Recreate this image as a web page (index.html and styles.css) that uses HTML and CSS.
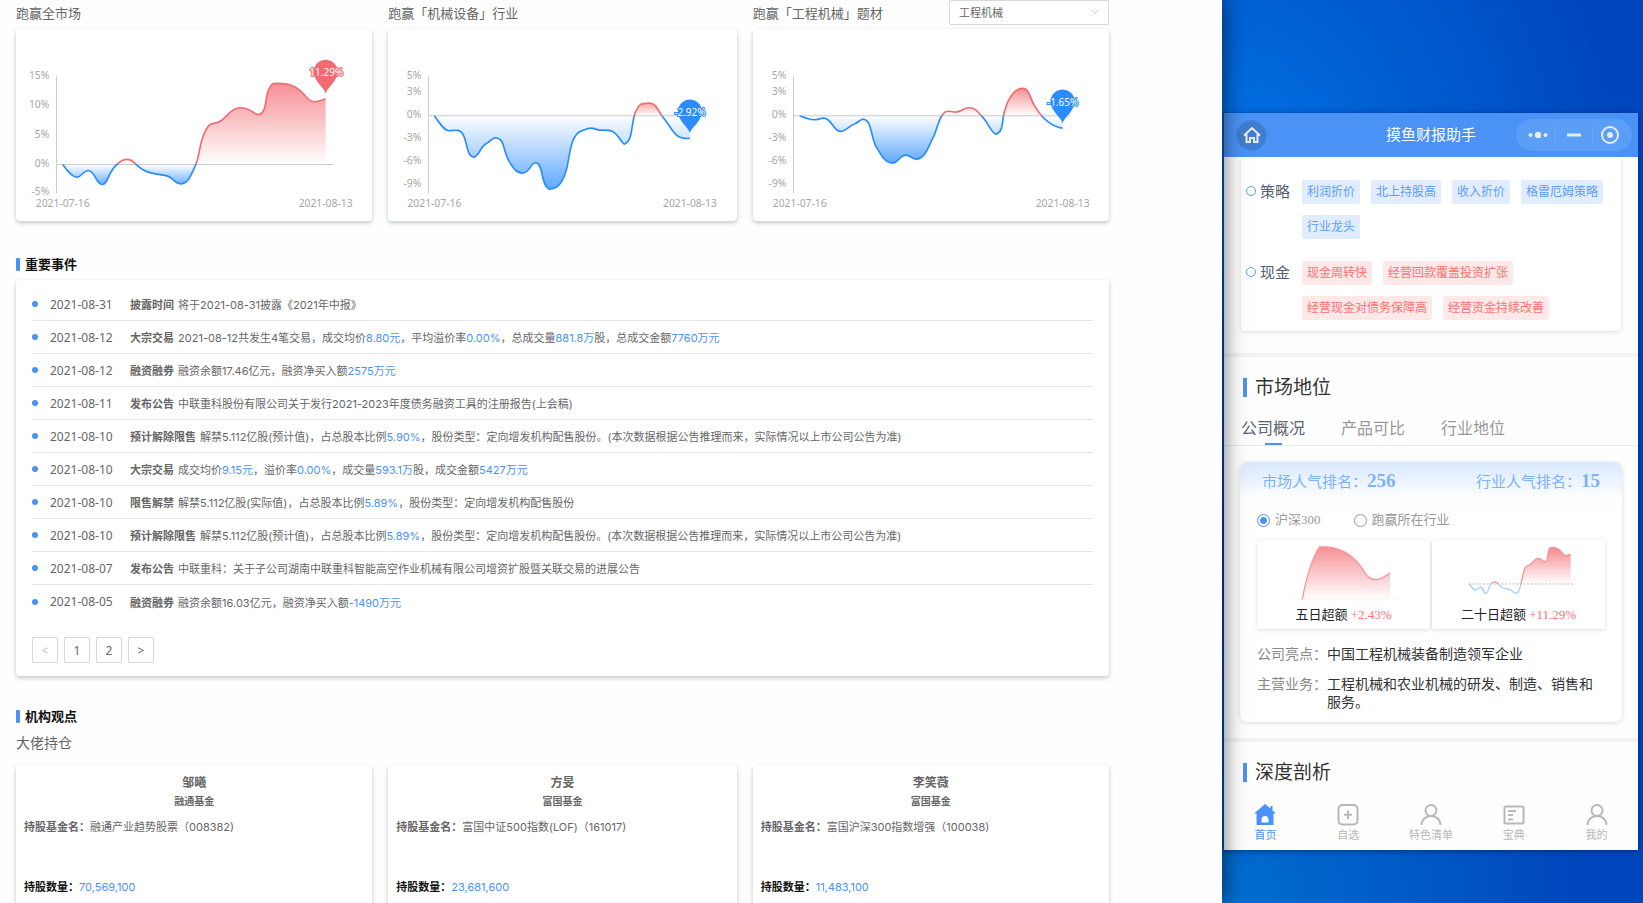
FILE: index.html
```html
<!DOCTYPE html>
<html lang="zh-CN">
<head>
<meta charset="utf-8">
<title>摸鱼财报助手</title>
<link rel="stylesheet" href="styles.css">
</head>
<body>
<svg class="defs" width="0" height="0" aria-hidden="true">
  <defs>
    <linearGradient id="line1" gradientUnits="userSpaceOnUse" x1="0" y1="0" x2="0" y2="986"><stop offset=".5" stop-color="#f26b72"/><stop offset=".5" stop-color="#2a8cff"/></linearGradient>
    <linearGradient id="line2" gradientUnits="userSpaceOnUse" x1="0" y1="0" x2="0" y2="694"><stop offset=".5" stop-color="#f26b72"/><stop offset=".5" stop-color="#2a8cff"/></linearGradient>
    <linearGradient id="area1" gradientUnits="userSpaceOnUse" x1="0" y1="250" x2="0" y2="554"><stop offset="0" stop-color="#f26b72" stop-opacity=".75"/><stop offset=".8" stop-color="#f26b72" stop-opacity="0"/><stop offset=".8" stop-color="#2a8cff" stop-opacity="0"/><stop offset="1" stop-color="#2a8cff" stop-opacity=".7"/></linearGradient>
    <linearGradient id="area2" gradientUnits="userSpaceOnUse" x1="0" y1="297" x2="0" y2="567"><stop offset="0" stop-color="#f26b72" stop-opacity=".8"/><stop offset=".185" stop-color="#f26b72" stop-opacity="0"/><stop offset=".185" stop-color="#2a8cff" stop-opacity="0"/><stop offset="1" stop-color="#2a8cff" stop-opacity=".75"/></linearGradient>
    <linearGradient id="area3" gradientUnits="userSpaceOnUse" x1="0" y1="265" x2="0" y2="489"><stop offset="0" stop-color="#f26b72" stop-opacity=".75"/><stop offset=".366" stop-color="#f26b72" stop-opacity="0"/><stop offset=".366" stop-color="#2a8cff" stop-opacity="0"/><stop offset="1" stop-color="#2a8cff" stop-opacity=".75"/></linearGradient>
    <linearGradient id="mini1" gradientUnits="userSpaceOnUse" x1="0" y1="48" x2="0" y2="207"><stop offset="0" stop-color="#f26b72" stop-opacity=".75"/><stop offset="1" stop-color="#f26b72" stop-opacity="0"/></linearGradient>
    <linearGradient id="mini2" gradientUnits="userSpaceOnUse" x1="0" y1="50" x2="0" y2="160"><stop offset="0" stop-color="#f26b72" stop-opacity=".8"/><stop offset="1" stop-color="#f26b72" stop-opacity="0"/></linearGradient>
    <linearGradient id="miniline" gradientUnits="userSpaceOnUse" x1="0" y1="0" x2="0" y2="320"><stop offset=".5" stop-color="#f4969b"/><stop offset=".5" stop-color="#a5cdff"/></linearGradient>
  </defs>
</svg>

<main class="report">
  <section class="charts">
    <article class="chart">
      <header class="chart-head"><h3>跑赢全市场</h3></header>
      <svg class="card plot" viewBox="48 87 1068 576" role="img" aria-label="跑赢全市场 11.29%">
        <path class="axis" d="M169.500 229V580M169 493H998"/>
        <g class="ticks"><text x="148" y="238">15%</text><text x="148" y="325">10%</text><text x="148" y="414">5%</text><text x="148" y="500">0%</text><text x="148" y="586">-5%</text></g>
        <g class="dates"><text x="188" y="620">2021-07-16</text><text x="976" y="620">2021-08-13</text></g>
        <path fill="url(#area1)" d="M188 493C200 510 216 531 230 531C245 531 250 511 264 511C285 511 288 553 306 553C325 553 325 510 353 491C365 480 370 478 380 478C395 478 400 485 408 493C420 505 435 515 455 519C475 524 490 523 503 528C520 535 525 551 541 551C565 551 572 525 587 493C600 460 597 430 614 396C628 366 632 373 655 366C675 360 690 323 718 323C755 323 760 344 774 344C803 338 792 290 807 265C815 248 818 250 835 250C865 250 880 256 900 272C915 283 922 305 942 305C955 305 965 300 976 296V493Z"/>
        <path class="curve" stroke="url(#line1)" d="M188 493C200 510 216 531 230 531C245 531 250 511 264 511C285 511 288 553 306 553C325 553 325 510 353 491C365 480 370 478 380 478C395 478 400 485 408 493C420 505 435 515 455 519C475 524 490 523 503 528C520 535 525 551 541 551C565 551 572 525 587 493C600 460 597 430 614 396C628 366 632 373 655 366C675 360 690 323 718 323C755 323 760 344 774 344C803 338 792 290 807 265C815 248 818 250 835 250C865 250 880 256 900 272C915 283 922 305 942 305C955 305 965 300 976 296"/>
        <g class="pin red"><path d="M976 282C976 266 940 245 940 215A36 36 0 0 1 1012 215C1012 245 976 266 976 282Z"/><text x="978" y="228">11.29%</text></g>
      </svg>
    </article>
    <article class="chart">
      <header class="chart-head"><h3>跑赢「机械设备」行业</h3></header>
      <svg class="card plot" viewBox="39 87 1044 576" role="img" aria-label="跑赢机械设备行业 -2.92%">
        <path class="axis" d="M160.500 229V580M160 347H968"/>
        <g class="ticks"><text x="139" y="238">5%</text><text x="139" y="284">3%</text><text x="139" y="354">0%</text><text x="139" y="423">-3%</text><text x="139" y="493">-6%</text><text x="139" y="562">-9%</text></g>
        <g class="dates"><text x="178" y="620">2021-07-16</text><text x="944" y="620">2021-08-13</text></g>
        <path fill="url(#area2)" d="M178 347C192 368 208 392 222 392C235 392 240 389 248 391C280 396 268 470 297 471C312 468 315 440 336 429C345 423 353 413 362 413C390 416 383 450 400 480C414 504 424 519 442 519C464 519 466 488 482 488C505 488 496 555 522 567C550 567 565 545 576 500C585 450 590 400 622 391C632 387 638 384 648 384C658 384 665 390 675 390C690 390 703 389 712 394C730 402 740 432 748 432C777 420 765 360 785 327C792 312 798 310 820 309C836 308 840 315 860 347C880 372 890 393 903 404C915 415 930 416 944 415V347Z"/>
        <path class="curve" stroke="url(#line2)" d="M178 347C192 368 208 392 222 392C235 392 240 389 248 391C280 396 268 470 297 471C312 468 315 440 336 429C345 423 353 413 362 413C390 416 383 450 400 480C414 504 424 519 442 519C464 519 466 488 482 488C505 488 496 555 522 567C550 567 565 545 576 500C585 450 590 400 622 391C632 387 638 384 648 384C658 384 665 390 675 390C690 390 703 389 712 394C730 402 740 432 748 432C777 420 765 360 785 327C792 312 798 310 820 309C836 308 840 315 860 347C880 372 890 393 903 404C915 415 930 416 944 415"/>
        <g class="pin blue"><path d="M944 401C944 385 908 364 908 334A36 36 0 0 1 980 334C980 364 944 385 944 401Z"/><text x="944" y="348">-2.92%</text></g>
      </svg>
    </article>
    <article class="chart">
      <header class="chart-head"><h3>跑赢「工程机械」题材</h3>
        <span class="picker"><select aria-label="题材"><option>工程机械</option></select><svg viewBox="0 0 10 8" aria-hidden="true"><path d="M1 1L5 6L9 1"/></svg></span>
      </header>
      <svg class="card plot" viewBox="36 87 1068 576" role="img" aria-label="跑赢工程机械题材 -1.65%">
        <path class="axis" d="M157.500 229V580M157 347H986"/>
        <g class="ticks"><text x="136" y="238">5%</text><text x="136" y="284">3%</text><text x="136" y="354">0%</text><text x="136" y="423">-3%</text><text x="136" y="493">-6%</text><text x="136" y="562">-9%</text></g>
        <g class="dates"><text x="176" y="620">2021-07-16</text><text x="964" y="620">2021-08-13</text></g>
        <path fill="url(#area3)" d="M176 347C190 353 203 359 220 359C232 359 238 353 250 354C275 358 275 394 300 394C315 392 322 378 342 371C352 366 358 357 367 357C392 362 388 405 404 438C420 465 432 489 454 489C470 489 477 465 493 465C507 465 512 477 527 477C555 472 560 440 578 408C590 380 592 355 608 339C617 328 628 336 643 336C660 336 665 323 684 323C700 323 708 332 720 347C740 365 752 402 764 402C790 395 780 355 792 327C804 285 825 265 844 265C864 265 866 295 880 318C900 350 930 380 964 384V347Z"/>
        <path class="curve" stroke="url(#line2)" d="M176 347C190 353 203 359 220 359C232 359 238 353 250 354C275 358 275 394 300 394C315 392 322 378 342 371C352 366 358 357 367 357C392 362 388 405 404 438C420 465 432 489 454 489C470 489 477 465 493 465C507 465 512 477 527 477C555 472 560 440 578 408C590 380 592 355 608 339C617 328 628 336 643 336C660 336 665 323 684 323C700 323 708 332 720 347C740 365 752 402 764 402C790 395 780 355 792 327C804 285 825 265 844 265C864 265 866 295 880 318C900 350 930 380 964 384"/>
        <g class="pin blue"><path d="M964 371C964 355 928 334 928 304A36 36 0 0 1 1000 304C1000 334 964 355 964 371Z"/><text x="964" y="317">-1.65%</text></g>
      </svg>
    </article>
  </section>

  <section class="events">
    <h2 class="title">重要事件</h2>
    <div class="card events-card">
      <ul class="event-list">
        <li><time>2021-08-31</time><p><b>披露时间</b> 将于2021-08-31披露《2021年中报》</p></li>
        <li><time>2021-08-12</time><p><b>大宗交易</b> 2021-08-12共发生4笔交易，成交均价<em>8.80元</em>，平均溢价率<em>0.00%</em>，总成交量<em>881.8万</em>股，总成交金额<em>7760万元</em></p></li>
        <li><time>2021-08-12</time><p><b>融资融券</b> 融资余额17.46亿元，融资净买入额<em>2575万元</em></p></li>
        <li><time>2021-08-11</time><p><b>发布公告</b> 中联重科股份有限公司关于发行2021-2023年度债务融资工具的注册报告(上会稿)</p></li>
        <li><time>2021-08-10</time><p><b>预计解除限售</b> 解禁5.112亿股(预计值)，占总股本比例<em>5.90%</em>，股份类型：定向增发机构配售股份。(本次数据根据公告推理而来，实际情况以上市公司公告为准)</p></li>
        <li><time>2021-08-10</time><p><b>大宗交易</b> 成交均价<em>9.15元</em>，溢价率<em>0.00%</em>，成交量<em>593.1万</em>股，成交金额<em>5427万元</em></p></li>
        <li><time>2021-08-10</time><p><b>限售解禁</b> 解禁5.112亿股(实际值)，占总股本比例<em>5.89%</em>，股份类型：定向增发机构配售股份</p></li>
        <li><time>2021-08-10</time><p><b>预计解除限售</b> 解禁5.112亿股(预计值)，占总股本比例<em>5.89%</em>，股份类型：定向增发机构配售股份。(本次数据根据公告推理而来，实际情况以上市公司公告为准)</p></li>
        <li><time>2021-08-07</time><p><b>发布公告</b> 中联重科：关于子公司湖南中联重科智能高空作业机械有限公司增资扩股暨关联交易的进展公告</p></li>
        <li><time>2021-08-05</time><p><b>融资融券</b> 融资余额16.03亿元，融资净买入额<em>-1490万元</em></p></li>
      </ul>
      <nav class="pager" aria-label="分页">
        <button type="button" disabled>&lt;</button><button type="button">1</button><button type="button">2</button><button type="button">&gt;</button>
      </nav>
    </div>
  </section>

  <section class="views">
    <h2 class="title">机构观点</h2>
    <h3 class="subtitle">大佬持仓</h3>
    <div class="funds">
      <article class="card fund">
        <h4>邹曦</h4><h5>融通基金</h5>
        <p class="fund-name"><b>持股基金名：</b>融通产业趋势股票（008382)</p>
        <p><b class="dark">持股数量：</b><em>70,569,100</em></p>
      </article>
      <article class="card fund">
        <h4>方旻</h4><h5>富国基金</h5>
        <p class="fund-name"><b>持股基金名：</b>富国中证500指数(LOF)（161017)</p>
        <p><b class="dark">持股数量：</b><em>23,681,600</em></p>
      </article>
      <article class="card fund">
        <h4>李笑薇</h4><h5>富国基金</h5>
        <p class="fund-name"><b>持股基金名：</b>富国沪深300指数增强（100038)</p>
        <p><b class="dark">持股数量：</b><em>11,483,100</em></p>
      </article>
    </div>
  </section>
</main>

<aside class="desktop">
  <div class="phone">
    <header class="bar">
      <button type="button" class="home" aria-label="首页"><svg viewBox="0 0 20 20"><path d="M2 10.500L10 3L18 10.500M4.500 9V17H8V13H12V17H15.500V9"/></svg></button>
      <h1>摸鱼财报助手</h1>
      <div class="capsule">
        <button type="button" aria-label="更多"><svg viewBox="0 0 20 20"><circle class="solid" cx="2.500" cy="10" r="2"/><circle class="solid" cx="10" cy="10" r="3.200"/><circle class="solid" cx="17.500" cy="10" r="2"/></svg></button>
        <button type="button" aria-label="最小化"><svg viewBox="0 0 20 20"><path d="M3 10H17" stroke-width="3"/></svg></button>
        <button type="button" aria-label="关闭"><svg viewBox="0 0 20 20"><circle cx="10" cy="10" r="8"/><circle class="solid" cx="10" cy="10" r="3"/></svg></button>
      </div>
    </header>
    <div class="screen">
      <section class="tags">
        <div class="tag-row"><h4>策略</h4><ul><li>利润折价</li><li>北上持股高</li><li>收入折价</li><li>格雷厄姆策略</li><li>行业龙头</li></ul></div>
        <div class="tag-row warn"><h4>现金</h4><ul><li>现金周转快</li><li>经营回款覆盖投资扩张</li><li>经营现金对债务保障高</li><li>经营资金持续改善</li></ul></div>
      </section>
      <section class="block">
        <h2>市场地位</h2>
        <nav class="tabs"><button type="button" class="on">公司概况</button><button type="button">产品可比</button><button type="button">行业地位</button></nav>
        <div class="profile">
          <div class="ranks"><span>市场人气排名：<strong>256</strong></span><span>行业人气排名：<strong>15</strong></span></div>
          <div class="radios">
            <label><input type="radio" name="base" checked>沪深300</label>
            <label><input type="radio" name="base">跑赢所在行业</label>
          </div>
          <div class="minis">
            <figure>
              <svg viewBox="126 28 519 190" aria-hidden="true">
                <path class="dash faint" d="M235 207H552"/>
                <path fill="url(#mini1)" d="M262 207C272 150 290 85 313 49C365 45 405 65 436 105C450 125 457 147 482 147C497 147 510 138 525 127V207Z"/>
                <path class="mini-curve" stroke="#f4969b" d="M262 207C272 150 290 85 313 49C365 45 405 65 436 105C450 125 457 147 482 147C497 147 510 138 525 127"/>
              </svg>
              <figcaption>五日超额 <span>+2.43%</span></figcaption>
            </figure>
            <figure>
              <svg viewBox="651 28 519 190" aria-hidden="true">
                <path class="dash" d="M760 160H1074"/>
                <path fill="url(#mini2)" d="M918 160C925 135 923 109 940 104C953 104 955 83 970 83C980 83 982 94 990 94C1003 90 995 50 1008 50C1022 50 1030 52 1038 62C1046 76 1052 77 1067 71V160ZM826 160Q839 147 852 160Z"/>
                <path class="mini-curve" stroke="url(#miniline)" d="M763 160C770 170 776 178 782 178C790 178 790 169 797 169C805 169 804 188 812 188C821 188 820 168 830 158C836 152 842 151 850 160C862 178 878 174 888 178C894 183 897 188 902 188C910 188 914 178 918 160C925 135 923 109 940 104C953 104 955 83 970 83C980 83 982 94 990 94C1003 90 995 50 1008 50C1022 50 1030 52 1038 62C1046 76 1052 77 1067 71"/>
              </svg>
              <figcaption>二十日超额 <span>+11.29%</span></figcaption>
            </figure>
          </div>
          <dl>
            <dt>公司亮点：</dt><dd>中国工程机械装备制造领军企业</dd>
            <dt>主营业务：</dt><dd>工程机械和农业机械的研发、制造、销售和服务。</dd>
          </dl>
        </div>
      </section>
      <section class="block"><h2>深度剖析</h2></section>
    </div>
    <nav class="dock">
      <a href="#" class="on"><svg viewBox="0 0 22 22"><path class="solid" d="M11 0L0 9.500H2.500V21H7.500V15.500A3.500 3.500 0 0 1 14.500 15.500V21H19.500V9.500H22L18.500 6.500V2H16.500V4.500Z"/><path class="solid" d="M7 18.500H15V21H7Z"/></svg>首页</a>
      <a href="#"><svg viewBox="0 0 22 22"><rect x="1.500" y="1" width="19" height="19.500" rx="4"/><path d="M11 6.500V15M7 10.700H15"/></svg>自选</a>
      <a href="#"><svg viewBox="0 0 22 22"><circle cx="11" cy="6.500" r="5.500"/><path d="M1.500 21C2 9 20 9 20.500 21"/></svg>特色清单</a>
      <a href="#"><svg viewBox="0 0 22 22"><rect x="1.500" y="2.500" width="19" height="17" rx="1"/><path d="M5 7H13M5 11H10M5 15.500H10"/></svg>宝典</a>
      <a href="#"><svg viewBox="0 0 22 22"><circle cx="11" cy="6.500" r="5.500"/><path d="M1.500 21C2 9 20 9 20.500 21"/></svg>我的</a>
    </nav>
  </div>
</aside>
</body>
</html>
```
FILE: styles.css
```css
* { box-sizing: border-box; }
body, h1, h2, h3, h4, h5, p, ul, dl, dd, figure { margin: 0; padding: 0; }
ul { list-style: none; }
em { font-style: normal; color: #4a92f5; }
button, select { font: inherit; color: inherit; }
a { text-decoration: none; }

body {
  display: flex;
  height: 100vh;
  overflow: hidden;
  font-family: "Noto Sans", "Noto Sans CJK SC", sans-serif;
  font-size: 11px;
  color: #666;
}
.defs { position: absolute; }

/* report page */
.report {
  position: relative;
  z-index: 1;
  flex: 1;
  min-width: 0;
  padding: 0 113px 0 16px;
  background: #fefefe;
  box-shadow: 2px 0 20px rgba(0, 0, 0, .55);
}
.card {
  background: #fff;
  border-radius: 4px;
  box-shadow: 0 2px 4px rgba(40, 50, 80, .28);
}
.charts, .funds {
  display: grid;
  grid-template-columns: 356fr 348fr 356fr;
  gap: 16px;
}
.chart-head {
  display: flex;
  justify-content: space-between;
  align-items: center;
  height: 25px;
  margin-bottom: 4px;
}
.chart-head h3 { font-size: 13px; font-weight: 400; white-space: nowrap; }
.picker { position: relative; width: 160px; }
.picker select {
  display: block;
  width: 100%;
  height: 25px;
  padding: 0 9px;
  appearance: none;
  background: #fff;
  border: 1px solid #d9d9d9;
  border-radius: 1px;
}
.picker svg {
  position: absolute;
  top: 9px;
  right: 10px;
  width: 8px;
  fill: none;
  stroke: #bbb;
  pointer-events: none;
}
.plot { display: block; width: 100%; height: auto; }
.axis { fill: none; stroke: #ccc; stroke-width: 3; }
.ticks text, .dates text { font-size: 31px; fill: #a6a6a6; }
.ticks { text-anchor: end; }
.dates, .pin { text-anchor: middle; }
.curve { fill: none; stroke-width: 5; }
.pin text { font-size: 30px; fill: #fff; stroke-width: 6; paint-order: stroke; stroke-linejoin: round; }
.red { fill: #f26b72; stroke: #f26b72; }
.blue { fill: #2a8cff; stroke: #2a8cff; }
.pin path { stroke: none; }

.title {
  display: flex;
  align-items: center;
  gap: 5px;
  font-size: 13px;
  line-height: 18px;
  color: #111;
}
.title::before {
  content: "";
  width: 4px;
  height: 13px;
  border-radius: 1px;
  background: #4a92f5;
}
.events { margin-top: 34px; }
.events-card { margin-top: 7px; padding: 8px 16px 13px; }
.event-list li {
  display: flex;
  align-items: center;
  height: 33px;
  border-bottom: 1px solid #e6e6e6;
  white-space: nowrap;
}
.event-list li:last-child { border-bottom: 0; }
.event-list li::before {
  content: "";
  width: 6px;
  height: 6px;
  margin-right: 12px;
  border-radius: 50%;
  background: #4a92f5;
}
.event-list time { width: 80px; font-size: 12px; }
.event-list p, .fund p { font-family: Inter, "Noto Sans CJK SC", sans-serif; }
.event-list b { margin-right: 1px; }
.pager { display: flex; gap: 6px; margin-top: 19px; }
.pager button {
  width: 26px;
  height: 26px;
  padding: 0;
  border: 1px solid #d9d9d9;
  border-radius: 1px;
  background: #fff;
  font-size: 12px;
}
.pager button:disabled { color: #c4c4c4; }

.views { margin-top: 31px; }
.subtitle { margin-top: 8px; font-size: 14px; font-weight: 400; line-height: 20px; }
.funds { margin-top: 12px; }
.fund { height: 200px; padding: 8px; }
.fund h4 { font-size: 12px; line-height: 20px; text-align: center; }
.fund h5 { font-size: 10px; line-height: 16px; text-align: center; }
.fund p { line-height: 20px; white-space: nowrap; }
.fund .fund-name { height: 60px; margin-top: 8px; }
.dark { color: #111; }

/* desktop and phone window */
.desktop {
  flex: 0 0 421px;
  padding: 113px 5px 0 2px;
  background:
    radial-gradient(circle at 0 100%, rgba(0, 125, 215, .75), rgba(0, 110, 215, 0) 360px),
    radial-gradient(circle at 0 160px, rgba(0, 122, 235, .85), rgba(0, 100, 220, 0) 400px),
    #0046bc;
}
.phone {
  overflow: hidden;
  background: #fefefe;
  box-shadow: 0 1px 6px rgba(0, 20, 80, .6);
}
.bar {
  display: flex;
  align-items: center;
  justify-content: space-between;
  position: relative;
  height: 44px;
  padding: 0 6px 0 12px;
  background: #4a92f5;
  color: #fff;
}
.bar h1 {
  position: absolute;
  left: 0;
  right: 0;
  padding-bottom: 3px;
  font-size: 15px;
  font-weight: 400;
  text-align: center;
  pointer-events: none;
}
.bar svg { width: 20px; fill: none; stroke: #e8ecf2; stroke-width: 2; }
.bar .solid { fill: #e8ecf2; stroke: none; }
.home {
  display: grid;
  place-items: center;
  width: 31px;
  height: 31px;
  padding: 0;
  border: 1px solid #4785d8;
  border-radius: 50%;
  background: #3f7dd0;
}
.capsule {
  display: flex;
  align-items: center;
  width: 116px;
  height: 32px;
  padding: 0 4px;
  border-radius: 16px;
  background: #5b9ef7;
}
.capsule button {
  flex: 1;
  display: grid;
  place-items: center;
  height: 18px;
  padding: 0;
  border: 0;
  background: none;
}
.capsule button + button { border-left: 1px solid #6ba7f7; }

.tags {
  margin: 0 17px;
  padding: 23px 5px 11px;
  border-radius: 0 0 4px 4px;
  background: #fff;
  box-shadow: 0 1px 4px rgba(0, 0, 0, .15);
}
.tag-row { display: flex; }
.tag-row + .tag-row { margin-top: 22px; }
.tag-row h4 {
  display: flex;
  align-items: center;
  gap: 4px;
  flex: 0 0 56px;
  height: 21px;
  font-size: 15px;
  font-weight: 400;
  color: #555e70;
}
.tag-row h4::before {
  content: "";
  width: 8px;
  height: 8px;
  border: 1px solid #5b9ef7;
  border-radius: 50%;
}
.tag-row ul { display: flex; flex-wrap: wrap; gap: 11px; }
.tag-row li {
  height: 24px;
  padding: 0 5px;
  border-radius: 2px;
  font-size: 12px;
  line-height: 24px;
  background: #e1edff;
  color: #5b9ef7;
}
.warn li { background: #ffe8e8; color: #ff7070; }

.block { margin-top: 22px; border-top: 4px solid #f3f3f3; padding-top: 17px; }
.block + .block { margin-top: 16px; }
.block h2 {
  display: flex;
  align-items: center;
  gap: 8px;
  padding-left: 19px;
  font-size: 19px;
  font-weight: 400;
  line-height: 26px;
  color: #333;
}
.block h2::before { content: ""; width: 4px; height: 19px; background: #4a92f5; }
.tabs {
  display: flex;
  gap: 36px;
  margin-top: 16px;
  padding: 0 17px;
  border-bottom: 1px solid #eaeaea;
}
.tabs button {
  position: relative;
  height: 29px;
  padding: 0 0 5px;
  border: 0;
  background: none;
  font-size: 16px;
  line-height: 22px;
  color: #999;
}
.tabs .on { color: #5b6270; }
.tabs .on::after {
  content: "";
  position: absolute;
  left: 24px;
  bottom: 0;
  width: 17px;
  height: 2px;
  background: #4a92f5;
}
.profile {
  margin: 16px 16px 0;
  padding: 0 17px 11px;
  border-radius: 8px;
  background: linear-gradient(#d8e8ff, #fff 38px);
  box-shadow: 0 1px 5px rgba(0, 0, 0, .15);
}
.ranks {
  display: flex;
  justify-content: space-between;
  padding: 6px 5px 0;
  font-size: 15px;
  line-height: 26px;
  color: #7db2fb;
}
.ranks strong { font-family: "Liberation Serif", serif; font-size: 19px; }
.radios {
  display: flex;
  gap: 33px;
  margin-top: 16px;
  font-family: "Liberation Serif", "Noto Sans CJK SC", serif;
  font-size: 13px;
  line-height: 20px;
  color: #999;
}
.radios label { display: flex; align-items: center; gap: 5px; }
.radios input {
  appearance: none;
  width: 13px;
  height: 13px;
  margin: 0;
  border: 1px solid #999;
  border-radius: 50%;
}
.radios input:checked { border-color: #4a92f5; background: radial-gradient(#4a92f5 3px, #fff 4px); }
.minis { display: grid; grid-template-columns: 1fr 1fr; gap: 2px; margin-top: 10px; }
.minis figure {
  border-radius: 3px;
  background: #fff;
  box-shadow: 0 1px 4px rgba(0, 0, 0, .14);
}
.minis svg { display: block; width: 100%; height: auto; }
.mini-curve { fill: none; stroke-width: 4; }
.dash { fill: none; stroke: #bbb; stroke-width: 3; stroke-dasharray: 6 5; }
.faint { stroke: #eee; }
.minis figcaption {
  padding: 2px 0 4px;
  font-family: "Liberation Serif", "Noto Sans CJK SC", serif;
  font-size: 13px;
  line-height: 20px;
  text-align: center;
  color: #222;
}
.minis figcaption span { color: #ff7070; }
.profile dl {
  display: grid;
  grid-template-columns: 70px 1fr;
  row-gap: 12px;
  margin-top: 16px;
  font-size: 14px;
  line-height: 18px;
}
.profile dt { color: #888; }
.profile dd { color: #333; }

.dock { display: flex; padding: 19px 0 8px; }
.dock a {
  flex: 1;
  display: flex;
  flex-direction: column;
  align-items: center;
  gap: 1px;
  font-size: 11px;
  line-height: 15px;
  color: #b8b8b8;
}
.dock svg { width: 22px; fill: none; stroke: currentColor; stroke-width: 2; }
.dock .solid { fill: currentColor; stroke: none; }
.dock .on { color: #4a92f5; }
```
